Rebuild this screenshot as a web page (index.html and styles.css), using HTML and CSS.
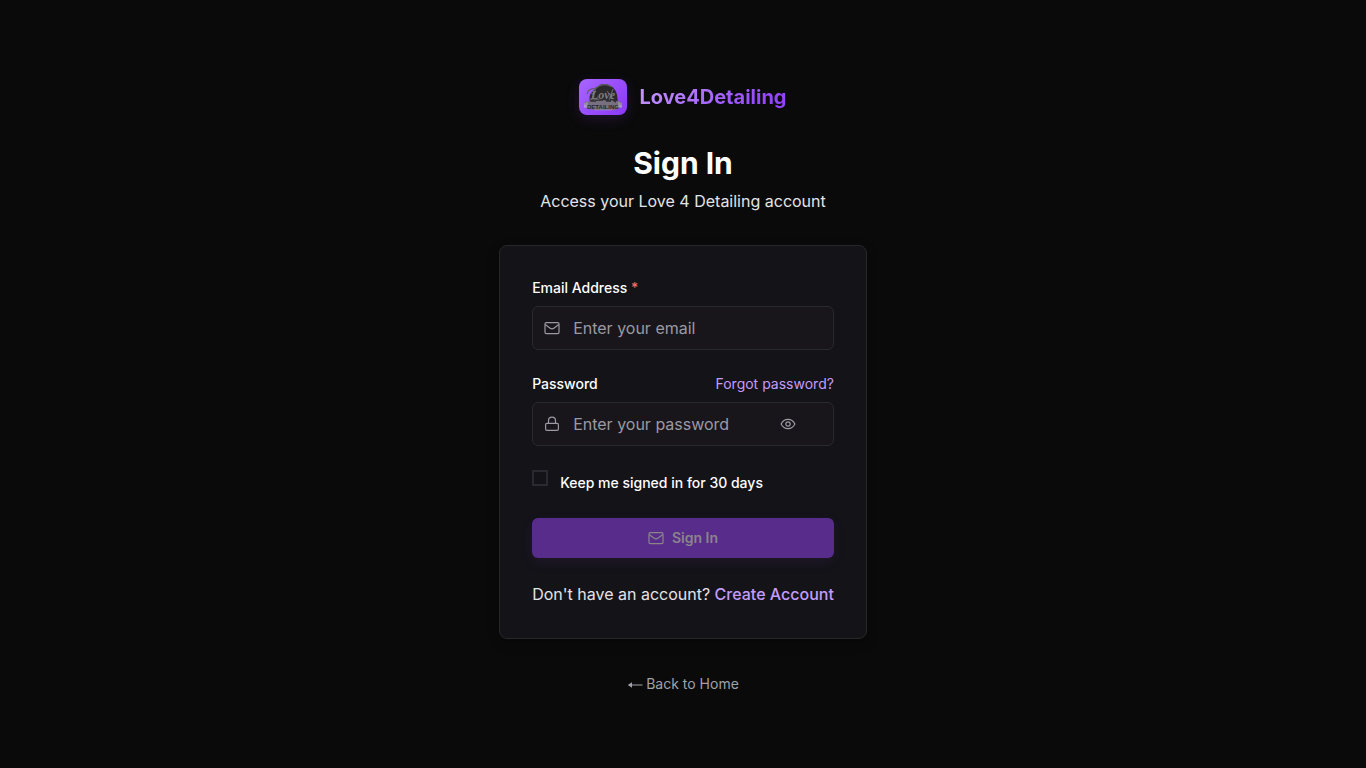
FILE: index.html
```html
<!DOCTYPE html>
<html lang="en">
<head>
<meta charset="utf-8">
<meta name="viewport" content="width=device-width, initial-scale=1">
<title>Sign In - Love4Detailing</title>
<link rel="stylesheet" href="styles.css">
</head>
<body>
<main class="page">
  <header class="header">
    <a class="brand" href="#">
      <span class="brand-mark">
        <svg viewBox="0 0 40 28" width="40" height="28" aria-hidden="true">
          <path d="M6 21C8 17 5 15 8 10L12 6C15 3 17 1 21 1C28 1 33 6 34 12L35 20Z" fill="#2a2a2d"/>
          <path d="M4 11c1-5 7-7 8-4s-2 5-4 3M13 4l-5 15M13 5c5-4 11-4 16-1M6 17c4-3 7 1 12-1M30 6l-4 11M24 8l6 8" fill="none" stroke="#5e5e63" stroke-width="1.2"/>
          <text class="mark-script" x="8" y="16">Love</text>
          <path d="M1 20l3-2 2 1 5-2 3 1 6-1 6 1 4-1 3 1 3 0 3 2-2 5-6 2H10l-7-2z" fill="#77717f"/>
          <path d="M2 20v5M4 19v6M36 19v6M38 20v5M1 23h5M34 23h5" stroke="#c9bddb" stroke-width=".7" fill="none"/>
          <path d="M8 18h5M16 17h4M23 18h5M30 17l3 2" stroke="#313034" stroke-width="1.6"/>
          <text class="mark-name" x="4" y="26">DETAILING</text>
          <path d="M11 27h18" stroke="#a183d5" stroke-width=".7"/>
        </svg>
      </span>
      <span class="brand-name">Love4Detailing</span>
    </a>
    <h1 class="title">Sign In</h1>
    <p class="subtitle">Access your Love 4 Detailing account</p>
  </header>

  <form class="card">
    <div class="field">
      <label class="label" for="email">Email Address <span class="required">*</span></label>
      <div class="control">
        <svg class="icon" viewBox="0 0 16 16" aria-hidden="true"><rect x="1" y="2.600" width="14" height="11" rx="1.400"/><path d="M1.200 4.500 5.800 8q2.200 1.600 4.400 0l4.600-3.500"/></svg>
        <input class="input" id="email" type="email" placeholder="Enter your email">
      </div>
    </div>
    <div class="field">
      <div class="label-row">
        <label class="label" for="password">Password</label>
        <a class="forgot" href="#">Forgot password?</a>
      </div>
      <div class="control">
        <svg class="icon" viewBox="0 0 16 16" aria-hidden="true"><rect x="1.600" y="7.400" width="12.800" height="7" rx="1.300"/><path d="M4.500 7.400V4.700a3.500 3.500 0 0 1 7 0v2.700"/></svg>
        <input class="input" id="password" type="password" placeholder="Enter your password">
        <button class="reveal" type="button" aria-label="Show password">
          <svg class="icon" viewBox="0 0 16 16" aria-hidden="true"><path d="M1.100 8C2.600 5 5 3.300 8 3.300S13.400 5 14.900 8C13.400 11 11 12.700 8 12.700S2.600 11 1.100 8Z"/><circle cx="8" cy="8" r="2.200"/></svg>
        </button>
      </div>
    </div>
    <div class="remember">
      <input class="checkbox" id="remember" type="checkbox">
      <label class="label remember-label" for="remember">Keep me signed in for 30 days</label>
    </div>
    <button class="submit" type="submit" disabled>
      <svg class="icon" viewBox="0 0 16 16" aria-hidden="true"><rect x="1" y="2.600" width="14" height="11" rx="1.400"/><path d="M1.200 4.500 5.800 8q2.200 1.600 4.400 0l4.600-3.500"/></svg>
      <span>Sign In</span>
    </button>
    <p class="signup">Don't have an account? <a class="create" href="#">Create Account</a></p>
  </form>

  <a class="back" href="#">
    <svg class="arrow" viewBox="0 0 16 12" aria-hidden="true"><path d="M2 7h13.500"/><path class="arrow-head" d="M.8 7 5 4.200v5.600z"/></svg>
    <span>Back to Home</span>
  </a>
</main>
</body>
</html>
```
FILE: styles.css
```css
* {
  box-sizing: border-box;
}

body {
  margin: 0;
  background: #0a0a0a;
  color: #fff;
  font-family: Inter, "Liberation Sans", sans-serif;
  font-size: 16px;
  line-height: 24px;
}

a {
  text-decoration: none;
}

.page {
  min-height: 100vh;
  display: flex;
  flex-direction: column;
  align-items: center;
  justify-content: center;
  gap: 32px;
  padding: 32px 16px;
}

.header {
  display: flex;
  flex-direction: column;
  align-items: center;
  text-align: center;
}

.brand {
  display: flex;
  align-items: center;
  gap: 12px;
  padding: 5px 0;
  margin-bottom: 25px;
}

.brand-mark {
  display: flex;
  padding: 4px;
  border-radius: 8px;
  background: linear-gradient(135deg, #a866ff, #8b38f8);
  box-shadow: 0 4px 14px rgba(151, 71, 255, 0.15);
}

.mark-script {
  font: italic bold 12px "Liberation Serif", serif;
  fill: #7c7c80;
}

.mark-name {
  font: bold 6px "Liberation Sans", sans-serif;
  fill: #29272c;
}

.brand-name {
  font-size: 20px;
  line-height: 28px;
  font-weight: 700;
  color: transparent;
  background: linear-gradient(135deg, #c49bff, #9747ff 80%, #9040fb);
  background-clip: text;
  -webkit-background-clip: text;
}

.title {
  margin: 0 0 8px;
  font-size: 30px;
  line-height: 36px;
  font-weight: 700;
}

.subtitle {
  margin: 0;
  color: #e4e4e7;
}

.card {
  display: flex;
  flex-direction: column;
  gap: 24px;
  padding: 32px;
  border: 1px solid #27272a;
  border-radius: 8px;
  background: #141318;
  box-shadow: 0 4px 12px rgba(0, 0, 0, 0.3);
}

.field {
  display: flex;
  flex-direction: column;
  gap: 8px;
}

.label-row {
  display: flex;
  justify-content: space-between;
}

.label,
.forgot,
.back {
  font-size: 14px;
  line-height: 20px;
}

.label {
  font-weight: 500;
}

.required {
  color: #f86868;
}

.forgot,
.create {
  color: #c49bff;
}

.control {
  display: flex;
  align-items: center;
  gap: 13px;
  height: 44px;
  padding: 0 11px;
  border: 1px solid #2a2930;
  border-radius: 6px;
  background: #18161b;
  color: #9b99a3;
}

.icon {
  width: 16px;
  height: 16px;
  flex: none;
  fill: none;
  stroke: currentColor;
  stroke-width: 1.2;
  stroke-linejoin: round;
}

.input {
  flex: 1;
  min-width: 0;
  width: 0;
  padding: 0;
  border: 0;
  outline: 0;
  background: transparent;
  color: #fff;
  font: inherit;
}

.input::placeholder {
  color: #9b99a3;
  opacity: 1;
}

.reveal {
  display: flex;
  margin-right: 26px;
  padding: 0;
  border: 0;
  background: transparent;
  color: inherit;
}

.remember {
  display: flex;
  align-items: flex-start;
  gap: 12px;
  min-height: 24px;
}

.checkbox {
  appearance: none;
  width: 16px;
  height: 16px;
  margin: 0;
  border: 2px solid #2a2930;
}

.remember-label {
  padding-top: 3px;
}

.submit {
  display: flex;
  align-items: center;
  justify-content: center;
  gap: 8px;
  height: 40px;
  padding: 0 16px;
  border: 0;
  border-radius: 6px;
  background: #582c8b;
  color: #8a8589;
  box-shadow: 0 4px 14px rgba(151, 71, 255, 0.08);
  font: 600 14px/20px Inter, "Liberation Sans", sans-serif;
}

.signup {
  margin: 0;
  color: #e4e4e7;
  text-align: center;
}

.create {
  font-weight: 500;
}

.back {
  display: flex;
  align-items: center;
  gap: 3px;
  padding-top: 3px;
  color: #a1a1aa;
}

.arrow {
  width: 16px;
  height: 12px;
  fill: none;
  stroke: currentColor;
}

.arrow-head {
  fill: currentColor;
  stroke: none;
}
```
